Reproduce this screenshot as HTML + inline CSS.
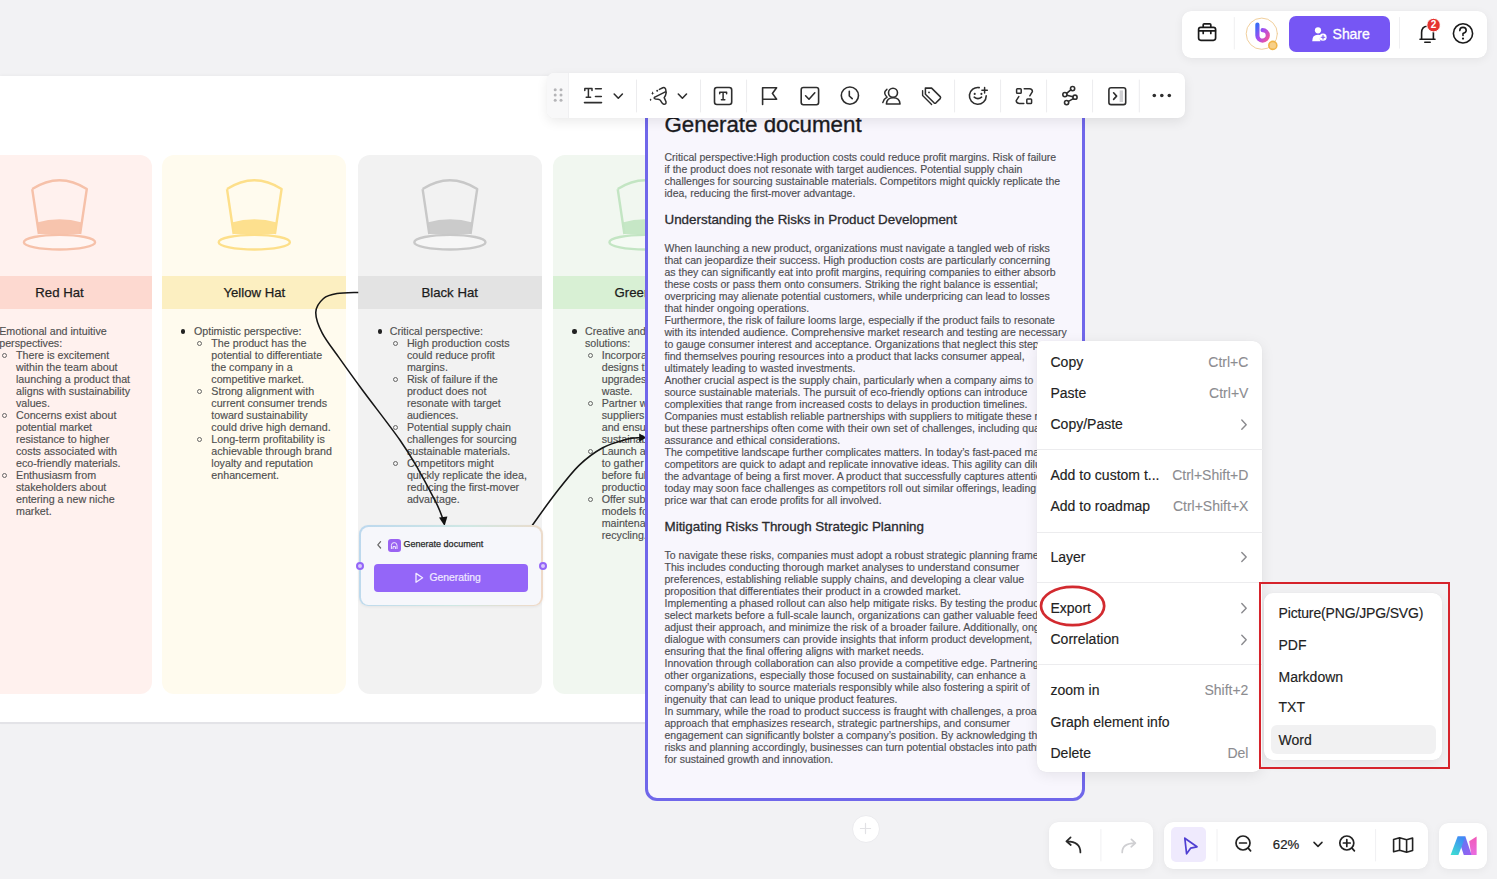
<!DOCTYPE html>
<html><head><meta charset="utf-8">
<style>
*{margin:0;padding:0;box-sizing:border-box}
html,body{width:1497px;height:879px;overflow:hidden;background:#f2f2f4;font-family:"Liberation Sans",sans-serif;position:relative}
.abs{position:absolute}
#frame{left:0;top:76px;width:1000px;height:648px;background:#fff;border-bottom:2px solid #e3e3e7;box-shadow:0 -1px 3px rgba(0,0,0,.035)}
.col{position:absolute;top:155px;width:184px;height:539px;border-radius:12px;overflow:hidden}
.col .hdr{position:absolute;left:0;top:276px;width:100%;height:33px}
.col .ttl{position:absolute;left:0;top:0;width:100%;height:33px;line-height:33px;text-align:center;font-size:13.2px;color:#1c1c1c;-webkit-text-stroke:0.25px #1c1c1c}
.col svg{position:absolute;left:0;top:0}
.ctext{position:absolute;font-size:10.7px;line-height:12px;color:#505050;white-space:nowrap;-webkit-text-stroke:0.15px #505050}
.dot{position:absolute;width:4.4px;height:4.4px;margin:-0.2px 0 0 -0.2px;border-radius:50%;background:#222}
.circ{position:absolute;width:5px;height:5px;border-radius:50%;border:1.2px solid #666}
.dtext{position:absolute;left:16.5px;font-size:10.5px;line-height:12px;color:#4e4e52;white-space:nowrap;-webkit-text-stroke:0.15px #4e4e52}
.dh{position:absolute;left:16.5px;font-size:13.4px;line-height:16px;color:#2a2a2e;white-space:nowrap;-webkit-text-stroke:0.3px #2a2a2e}
.mi{position:absolute;left:1050.5px;font-size:14px;line-height:17px;color:#222;white-space:nowrap;-webkit-text-stroke:0.15px #222}
.ms{position:absolute;right:248.6px;font-size:14px;line-height:17px;color:#8c8c90;white-space:nowrap;-webkit-text-stroke:0.1px #8c8c90}
</style></head><body>
<div id="frame" class="abs"></div>

<!-- columns -->
<div class="col" style="left:-32.5px;background:#fff1ee">
  <div class="hdr" style="top:121px;background:#fdd9d0"><div class="ttl">Red Hat</div></div>
</div>
<div class="col" style="left:162.3px;background:#fffbee">
  <div class="hdr" style="top:121px;background:#fcefc1"><div class="ttl">Yellow Hat</div></div>
</div>
<div class="col" style="left:357.7px;background:#f2f2f2">
  <div class="hdr" style="top:121px;background:#e3e3e3"><div class="ttl">Black Hat</div></div>
</div>
<div class="col" style="left:553px;background:#f1f7f0">
  <div class="hdr" style="top:121px;background:#d8f0d4"><div class="ttl">Green Hat</div></div>
</div>

<!-- hats -->
<svg class="abs" style="left:0;top:0" width="1497" height="879">
<g stroke="#f6c1a9" stroke-width="2.4" stroke-linejoin="round">
<path d="M38.5,234 L36.9,222.4 Q59.5,215.9 82.1,222.4 L80.5,234 Z" fill="#f7c4ad" stroke="none"/>
<path d="M32.2,189 Q59.5,171.4 86.8,189 L80.1,234 M32.2,189 L38.9,234" fill="none"/>
<ellipse cx="59.5" cy="242.2" rx="35.6" ry="7.3" fill="#fff5f2"/>
</g><g stroke="#fddf8a" stroke-width="2.4" stroke-linejoin="round">
<path d="M233.3,234 L231.70000000000002,222.4 Q254.3,215.9 276.90000000000003,222.4 L275.3,234 Z" fill="#fde08e" stroke="none"/>
<path d="M227.0,189 Q254.3,171.4 281.6,189 L274.90000000000003,234 M227.0,189 L233.70000000000002,234" fill="none"/>
<ellipse cx="254.3" cy="242.2" rx="35.6" ry="7.3" fill="#fffcf0"/>
</g><g stroke="#c8c8c8" stroke-width="2.4" stroke-linejoin="round">
<path d="M428.9,234 L427.29999999999995,222.4 Q449.9,215.9 472.5,222.4 L470.9,234 Z" fill="#cbcbcb" stroke="none"/>
<path d="M422.59999999999997,189 Q449.9,171.4 477.2,189 L470.5,234 M422.59999999999997,189 L429.29999999999995,234" fill="none"/>
<ellipse cx="449.9" cy="242.2" rx="35.6" ry="7.3" fill="#f6f6f6"/>
</g><g stroke="#c3e5c3" stroke-width="2.4" stroke-linejoin="round">
<path d="M624,234 L622.4,222.4 Q645,215.9 667.6,222.4 L666,234 Z" fill="#c6e7c6" stroke="none"/>
<path d="M617.7,189 Q645,171.4 672.3,189 L665.6,234 M617.7,189 L624.4,234" fill="none"/>
<ellipse cx="645" cy="242.2" rx="35.6" ry="7.3" fill="#f5faf4"/>
</g></svg>
<!-- column texts -->
<div class="ctext" style="left:-0.8px;top:324.5px">Emotional and intuitive</div>
<div class="ctext" style="left:-0.8px;top:336.5px">perspectives:</div>
<div class="ctext" style="left:16px;top:348.5px">There is excitement</div>
<div class="circ" style="left:1.7000000000000002px;top:353.0px"></div>
<div class="ctext" style="left:16px;top:360.5px">within the team about</div>
<div class="ctext" style="left:16px;top:372.5px">launching a product that</div>
<div class="ctext" style="left:16px;top:384.5px">aligns with sustainability</div>
<div class="ctext" style="left:16px;top:396.5px">values.</div>
<div class="ctext" style="left:16px;top:408.5px">Concerns exist about</div>
<div class="circ" style="left:1.7000000000000002px;top:413.0px"></div>
<div class="ctext" style="left:16px;top:420.5px">potential market</div>
<div class="ctext" style="left:16px;top:432.5px">resistance to higher</div>
<div class="ctext" style="left:16px;top:444.5px">costs associated with</div>
<div class="ctext" style="left:16px;top:456.5px">eco-friendly materials.</div>
<div class="ctext" style="left:16px;top:468.5px">Enthusiasm from</div>
<div class="circ" style="left:1.7000000000000002px;top:473.0px"></div>
<div class="ctext" style="left:16px;top:480.5px">stakeholders about</div>
<div class="ctext" style="left:16px;top:492.5px">entering a new niche</div>
<div class="ctext" style="left:16px;top:504.5px">market.</div>
<div class="ctext" style="left:194px;top:324.5px">Optimistic perspective:</div>
<div class="dot" style="left:181.1px;top:329.5px"></div>
<div class="ctext" style="left:211.3px;top:336.5px">The product has the</div>
<div class="circ" style="left:197.3px;top:341.0px"></div>
<div class="ctext" style="left:211.3px;top:348.5px">potential to differentiate</div>
<div class="ctext" style="left:211.3px;top:360.5px">the company in a</div>
<div class="ctext" style="left:211.3px;top:372.5px">competitive market.</div>
<div class="ctext" style="left:211.3px;top:384.5px">Strong alignment with</div>
<div class="circ" style="left:197.3px;top:389.0px"></div>
<div class="ctext" style="left:211.3px;top:396.5px">current consumer trends</div>
<div class="ctext" style="left:211.3px;top:408.5px">toward sustainability</div>
<div class="ctext" style="left:211.3px;top:420.5px">could drive high demand.</div>
<div class="ctext" style="left:211.3px;top:432.5px">Long-term profitability is</div>
<div class="circ" style="left:197.3px;top:437.0px"></div>
<div class="ctext" style="left:211.3px;top:444.5px">achievable through brand</div>
<div class="ctext" style="left:211.3px;top:456.5px">loyalty and reputation</div>
<div class="ctext" style="left:211.3px;top:468.5px">enhancement.</div>
<div class="ctext" style="left:389.7px;top:324.5px">Critical perspective:</div>
<div class="dot" style="left:377.7px;top:329.5px"></div>
<div class="ctext" style="left:406.9px;top:336.5px">High production costs</div>
<div class="circ" style="left:393.4px;top:341.0px"></div>
<div class="ctext" style="left:406.9px;top:348.5px">could reduce profit</div>
<div class="ctext" style="left:406.9px;top:360.5px">margins.</div>
<div class="ctext" style="left:406.9px;top:372.5px">Risk of failure if the</div>
<div class="circ" style="left:393.4px;top:377.0px"></div>
<div class="ctext" style="left:406.9px;top:384.5px">product does not</div>
<div class="ctext" style="left:406.9px;top:396.5px">resonate with target</div>
<div class="ctext" style="left:406.9px;top:408.5px">audiences.</div>
<div class="ctext" style="left:406.9px;top:420.5px">Potential supply chain</div>
<div class="circ" style="left:393.4px;top:425.0px"></div>
<div class="ctext" style="left:406.9px;top:432.5px">challenges for sourcing</div>
<div class="ctext" style="left:406.9px;top:444.5px">sustainable materials.</div>
<div class="ctext" style="left:406.9px;top:456.5px">Competitors might</div>
<div class="circ" style="left:393.4px;top:461.0px"></div>
<div class="ctext" style="left:406.9px;top:468.5px">quickly replicate the idea,</div>
<div class="ctext" style="left:406.9px;top:480.5px">reducing the first-mover</div>
<div class="ctext" style="left:406.9px;top:492.5px">advantage.</div>
<div class="ctext" style="left:585px;top:324.5px">Creative and innovative</div>
<div class="dot" style="left:572.5px;top:329.5px"></div>
<div class="ctext" style="left:585px;top:336.5px">solutions:</div>
<div class="ctext" style="left:601.7px;top:348.5px">Incorporate modular</div>
<div class="circ" style="left:588.0px;top:353.0px"></div>
<div class="ctext" style="left:601.7px;top:360.5px">designs that allow</div>
<div class="ctext" style="left:601.7px;top:372.5px">upgrades and reduce</div>
<div class="ctext" style="left:601.7px;top:384.5px">waste.</div>
<div class="ctext" style="left:601.7px;top:396.5px">Partner with local</div>
<div class="circ" style="left:588.0px;top:401.0px"></div>
<div class="ctext" style="left:601.7px;top:408.5px">suppliers to reduce</div>
<div class="ctext" style="left:601.7px;top:420.5px">and ensure</div>
<div class="ctext" style="left:601.7px;top:432.5px">sustainability.</div>
<div class="ctext" style="left:601.7px;top:444.5px">Launch a pilot</div>
<div class="circ" style="left:588.0px;top:449.0px"></div>
<div class="ctext" style="left:601.7px;top:456.5px">to gather feedback</div>
<div class="ctext" style="left:601.7px;top:468.5px">before full-scale</div>
<div class="ctext" style="left:601.7px;top:480.5px">production.</div>
<div class="ctext" style="left:601.7px;top:492.5px">Offer subscription</div>
<div class="circ" style="left:588.0px;top:497.0px"></div>
<div class="ctext" style="left:601.7px;top:504.5px">models for</div>
<div class="ctext" style="left:601.7px;top:516.5px">maintenance and</div>
<div class="ctext" style="left:601.7px;top:528.5px">recycling.</div>
<!-- connectors -->
<svg class="abs" style="left:0;top:0" width="1497" height="879">
<path d="M358.3,292.4 C354.8,292.6 342.8,292.6 337.0,293.6 C331.2,294.6 327.0,295.4 323.5,298.5 C320.0,301.6 316.0,306.6 315.8,312.3 C315.6,318.0 318.2,325.2 322.1,332.8 C326.0,340.4 332.5,348.4 339.2,357.9 C345.9,367.4 352.3,376.3 362.4,390.0 C372.5,403.7 390.5,426.6 399.9,440.0 C409.3,453.4 412.8,459.9 418.8,470.3 C424.8,480.8 432.1,494.8 436.1,502.7 C440.1,510.6 441.5,515.5 442.6,518.0" fill="none" stroke="#161616" stroke-width="1.55"/>
<path d="M439,517.6L444.6,526L447.4,516.6Z" fill="#111"/>
<path d="M532.2,525.4 C536.0,520.2 547.1,504.3 554.9,494.3 C562.7,484.3 570.8,473.4 578.8,465.6 C586.8,457.8 594.7,452.1 602.7,447.7 C610.7,443.3 620.4,441.0 626.6,439.3 C632.8,437.6 637.8,438.0 640.0,437.7" fill="none" stroke="#161616" stroke-width="1.55"/>
<path d="M639.2,433.6L646.4,437.6L639.2,441.8Z" fill="#111"/>
</svg>
<!-- node -->
<div class="abs" style="left:359px;top:525.2px;width:184px;height:81px;border-radius:9px;background:linear-gradient(100deg,#bcd8ee 0%,#cfe8e4 55%,#f1d9c6 100%);box-shadow:0 1px 3px rgba(0,0,0,.06)"></div>
<div class="abs" style="left:360.6px;top:526.8px;width:180.8px;height:77.8px;border-radius:7.6px;background:#f6f7fb"></div>
<svg class="abs" style="left:0;top:0" width="1497" height="879"><path d="M380.6,541.6L377.8,544.8L380.6,548" fill="none" stroke="#666" stroke-width="1.2" stroke-linecap="round" stroke-linejoin="round"/></svg>
<div class="abs" style="left:388.4px;top:539px;width:12.4px;height:12.6px;border-radius:3px;background:#9a63f2"></div>
<svg class="abs" style="left:388.4px;top:539px" width="13" height="13"><path d="M3.4,10V6.4Q3.4,3.6 6.2,3.6Q9,3.6 9,6.4V10M5,10V7.6H7.4V10" fill="none" stroke="#f3ecff" stroke-width="1"/></svg>
<div class="abs" style="left:403.6px;top:538.6px;font-size:9px;color:#2a2a2a;-webkit-text-stroke:0.25px #2a2a2a">Generate document</div>
<div class="abs" style="left:374.1px;top:564.2px;width:154.2px;height:27.8px;border-radius:4px;background:#9466f8"></div>
<svg class="abs" style="left:0;top:0" width="1497" height="879"><path d="M416,573.4L422.6,577.8L416,582.2Z" fill="none" stroke="#f2ebff" stroke-width="1.3" stroke-linejoin="round"/></svg>
<div class="abs" style="left:429.4px;top:571.6px;font-size:10.4px;color:#f0e9ff;-webkit-text-stroke:0.2px #f0e9ff">Generating</div>
<div class="abs" style="left:355.6px;top:562.4px;width:8px;height:8px;border-radius:50%;background:#d9c9fb;border:2px solid #9466f8"></div>
<div class="abs" style="left:538.6px;top:562.4px;width:8px;height:8px;border-radius:50%;background:#d9c9fb;border:2px solid #9466f8"></div>
<!-- doc -->
<div class="abs" id="doc" style="left:645px;top:96px;width:439.5px;height:704.5px;border:3.1px solid #7067ea;border-radius:12px;background:#f8f6fd;overflow:hidden">
<div class="abs" style="left:16.5px;top:13px;font-size:22.3px;color:#1b1b1f;white-space:nowrap;-webkit-text-stroke:0.35px #1b1b1f">Generate document</div>
<div class="dtext" style="top:52px">Critical perspective:High production costs could reduce profit margins. Risk of failure<br>if the product does not resonate with target audiences. Potential supply chain<br>challenges for sourcing sustainable materials. Competitors might quickly replicate the<br>idea, reducing the first-mover advantage.</div>
<div class="dh" style="top:113.3px">Understanding the Risks in Product Development</div>
<div class="dtext" style="top:142.7px">When launching a new product, organizations must navigate a tangled web of risks<br>that can jeopardize their success. High production costs are particularly concerning<br>as they can significantly eat into profit margins, requiring companies to either absorb<br>these costs or pass them onto consumers. Striking the right balance is essential;<br>overpricing may alienate potential customers, while underpricing can lead to losses<br>that hinder ongoing operations.<br>Furthermore, the risk of failure looms large, especially if the product fails to resonate<br>with its intended audience. Comprehensive market research and testing are necessary<br>to gauge consumer interest and acceptance. Organizations that neglect this step may<br>find themselves pouring resources into a product that lacks consumer appeal,<br>ultimately leading to wasted investments.<br>Another crucial aspect is the supply chain, particularly when a company aims to<br>source sustainable materials. The pursuit of eco-friendly options can introduce<br>complexities that range from increased costs to delays in production timelines.<br>Companies must establish reliable partnerships with suppliers to mitigate these risks,<br>but these partnerships often come with their own set of challenges, including quality<br>assurance and ethical considerations.<br>The competitive landscape further complicates matters. In today&#8217;s fast-paced market,<br>competitors are quick to adapt and replicate innovative ideas. This agility can dilute<br>the advantage of being a first mover. A product that successfully captures attention<br>today may soon face challenges as competitors roll out similar offerings, leading to a<br>price war that can erode profits for all involved.</div>
<div class="dh" style="top:420px">Mitigating Risks Through Strategic Planning</div>
<div class="dtext" style="top:449.7px">To navigate these risks, companies must adopt a robust strategic planning framework.<br>This includes conducting thorough market analyses to understand consumer<br>preferences, establishing reliable supply chains, and developing a clear value<br>proposition that differentiates their product in a crowded market.<br>Implementing a phased rollout can also help mitigate risks. By testing the product in<br>select markets before a full-scale launch, organizations can gather valuable feedback,<br>adjust their approach, and minimize the risk of a broader failure. Additionally, ongoing<br>dialogue with consumers can provide insights that inform product development,<br>ensuring that the final offering aligns with market needs.<br>Innovation through collaboration can also provide a competitive edge. Partnering with<br>other organizations, especially those focused on sustainability, can enhance a<br>company’s ability to source materials responsibly while also fostering a spirit of<br>ingenuity that can lead to unique product features.<br>In summary, while the road to product success is fraught with challenges, a proactive<br>approach that emphasizes research, strategic partnerships, and consumer<br>engagement can significantly bolster a company’s position. By acknowledging these<br>risks and planning accordingly, businesses can turn potential obstacles into pathways<br>for sustained growth and innovation.</div>
</div>
<!-- top toolbar -->
<div class="abs" style="left:546.5px;top:73px;width:638px;height:44.8px;background:#fff;border-radius:7px;box-shadow:0 4px 12px rgba(0,0,0,.08),0 0 1px rgba(0,0,0,.06)"></div>
<div class="abs" style="left:546.5px;top:73px;width:22px;height:44.8px;background:#f8f8f9;border-radius:7px 0 0 7px;border-right:1px solid #f0f0f2"></div>
<svg class="abs" style="left:0;top:0" width="1497" height="130" fill="none" stroke="#2e2e2e" stroke-width="1.6" stroke-linecap="round" stroke-linejoin="round">
<g fill="#b5b5b8" stroke="none"><circle cx="555.2" cy="89.8" r="1.5"/><circle cx="561" cy="89.8" r="1.5"/><circle cx="555.2" cy="95" r="1.5"/><circle cx="561" cy="95" r="1.5"/><circle cx="555.2" cy="100.2" r="1.5"/><circle cx="561" cy="100.2" r="1.5"/></g>
<g stroke="#ececee" stroke-width="1"><path d="M636.5,80V112M700.5,80V112M746.6,80V112M954.6,80V112M1000.6,80V112M1046.6,80V112M1092.6,80V112M1139.3,80V112"/></g>
<!-- T= -->
<path d="M584.8,89V90.6M584.8,88.6H592M588.4,88.6V97.3M586.2,97.3H590.6M592,88.6V90.6" stroke-width="1.5"/>
<path d="M595.5,88.8H601.3M595.5,96.5H601.3M584.5,102.6H601.5" stroke-width="1.6"/>
<path d="M614.2,94L618.3,98.2L622.4,94"/>
<!-- brush -->
<path d="M654.4,97.3L665.3,91.8M659.4,89.4L662.8,87.8Q664.8,87 665.6,89L666.2,92.6Q665.8,95.4 664.2,97.6L666,101.8Q666.4,104.4 663.8,104.2Q662.6,104 661.8,102.6L660.4,100.4Q659.6,99.4 658,99.2L655.6,99Q653.6,98.6 654.4,97.3" stroke-width="1.5"/>
<circle cx="657.2" cy="90.7" r="1" fill="#2e2e2e" stroke="none"/>
<path d="M652.6,91.3L653.3,92.9L654.6,93.2L653.3,93.6L652.6,95L651.9,93.6L650.6,93.2L651.9,92.9Z" fill="#2e2e2e" stroke="none"/>
<path d="M650.6,98.5L651.5,99.7L650.6,100.9L649.7,99.7Z" fill="#2e2e2e" stroke="none"/>
<path d="M678.3,94L682.4,98.2L686.5,94"/>
<!-- T box -->
<rect x="714.5" y="87.5" width="17.2" height="17" rx="2.4"/>
<path d="M719.7,93.8V92.3H726.6V93.8M723.1,92.3V99.7M721.4,99.7H724.8" stroke-width="1.5"/>
<!-- flag -->
<path d="M762.6,104.5V87.8H776.6L772.4,93.4L776.6,99.2H762.6"/>
<!-- checkbox -->
<rect x="801.2" y="87.5" width="17.4" height="17.2" rx="2.2"/>
<path d="M805.6,95.8L809,99.2L814.8,92.8"/>
<!-- clock -->
<circle cx="849.9" cy="95.6" r="8.6"/>
<path d="M849.3,91.2V96L852.2,98.6"/>
<!-- persons -->
<circle cx="893" cy="92.7" r="4.5"/>
<path d="M886.4,104Q886.8,97.8 893.2,97.8Q899.6,97.8 900,104Z"/>
<path d="M886.9,89.3Q882.4,92.8 887.1,97.2Q883.8,98.8 882.8,102.6" stroke-width="1.5"/>
<!-- tags -->
<path d="M925.4,88.1L931.6,88.1L940.2,96.6Q941,97.6 940.2,98.6L936,102.8Q935,103.6 934,102.8L925.4,94.2Z" stroke-width="1.55"/>
<path d="M922.6,90.6L922.6,95.4L931.6,104.4" stroke-width="1.4"/>
<circle cx="929" cy="92.4" r="0.9" fill="#2e2e2e" stroke="none"/>
<!-- emoji -->
<path d="M979.2,87.6A8.4,8.4 0 1 0 986.2,95.9" stroke-width="1.6"/>
<path d="M974.2,97.2Q977.9,100.2 981.6,97.2" stroke-width="1.6"/>
<circle cx="974.7" cy="93.9" r="1.05" fill="#2e2e2e" stroke="none"/><circle cx="981.4" cy="93.9" r="1.05" fill="#2e2e2e" stroke="none"/>
<path d="M984.6,87.5V92.9M981.9,90.2H987.3" stroke-width="1.5"/>
<!-- convert -->
<rect x="1016.6" y="88.8" width="4.6" height="4.4" rx="0.8" stroke-width="1.5"/>
<rect x="1026.8" y="98.9" width="4.8" height="4.6" rx="0.8" stroke-width="1.5"/>
<path d="M1024.2,88.8H1029.4Q1032.4,88.8 1032.4,91.6L1029.8,95.8" stroke-width="1.5"/>
<path d="M1023.8,103.4H1019.2Q1016.2,103.4 1016.2,100.6L1018.8,96.6" stroke-width="1.5"/>
<!-- graph -->
<circle cx="1072.6" cy="88.6" r="2.1"/><circle cx="1064.9" cy="94.6" r="2.1"/><circle cx="1075" cy="97.2" r="2.1"/><circle cx="1066.6" cy="102.6" r="2.1"/>
<path d="M1070.8,89.8L1066.6,93.4M1066.9,95.3L1073,96.7M1073.4,98.6L1068.4,101.4"/>
<!-- panel -->
<rect x="1108.9" y="87.7" width="16.8" height="16.9" rx="2.2"/>
<rect x="1119.6" y="90.4" width="3.4" height="11.6" fill="#cfcfd2" stroke="none"/>
<path d="M1113.6,92.8L1116.6,96.1L1113.6,99.4"/>
<!-- dots -->
<g fill="#2e2e2e" stroke="none"><circle cx="1154.3" cy="95.5" r="1.8"/><circle cx="1161.8" cy="95.5" r="1.8"/><circle cx="1169.3" cy="95.5" r="1.8"/></g>
</svg>
<!-- top right bar -->
<div class="abs" style="left:1182px;top:10.5px;width:305px;height:47px;background:#fff;border-radius:9px;box-shadow:0 2px 10px rgba(0,0,0,.06),0 0 1px rgba(0,0,0,.05)"></div>
<div class="abs" style="left:1289.2px;top:16px;width:100.8px;height:35.8px;background:#7656f4;border-radius:7px"></div>
<div class="abs" style="left:1332.6px;top:25.6px;font-size:14px;color:#fff;letter-spacing:-0.05px;-webkit-text-stroke:0.3px #fff">Share</div>
<svg class="abs" style="left:0;top:0" width="1497" height="70" fill="none" stroke="#1a1a1a" stroke-width="1.7" stroke-linecap="round" stroke-linejoin="round">
<rect x="1198.6" y="27.3" width="17" height="13" rx="2.2"/>
<path d="M1203.2,27V24.8Q1203.2,23.8 1204.2,23.8H1209.8Q1210.8,23.8 1210.8,24.8V27"/>
<path d="M1198.8,30.8H1215.4M1203.2,30.8V33.4M1210.8,30.8V33.4"/>
<path d="M1234.3,17.5V49" stroke="#efeff1" stroke-width="1"/>
<path d="M1399.5,17.5V48.2" stroke="#efeff1" stroke-width="1"/>
<!-- avatar -->
<circle cx="1261.8" cy="33.7" r="15.6" stroke="#f1cf9c" stroke-width="1" fill="#fff"/>
<defs><linearGradient id="bg1" x1="0" y1="0" x2="1" y2="1"><stop offset="0" stop-color="#3a6cf6"/><stop offset="0.45" stop-color="#a44cf2"/><stop offset="1" stop-color="#f3559a"/></linearGradient></defs>
<path d="M1257.4,24.6V35.4A5.2,5.2 0 1 0 1262.6,30.2" stroke="url(#bg1)" stroke-width="4.2" stroke-linecap="round"/>
<circle cx="1272.8" cy="45.4" r="4" fill="#f7d089" stroke="#f0b54a" stroke-width="1.6"/>
<!-- share person icon -->
<g stroke="none" fill="#fff"><circle cx="1318" cy="30.3" r="3.1"/><path d="M1312.2,41.2Q1312.2,34.8 1318,34.8Q1320.4,34.8 1321.6,35.8A4,4 0 0 0 1320.6,41.2Z"/><circle cx="1323" cy="37.2" r="3.6"/></g>
<path d="M1323,35.4V39M1321.2,37.2H1324.8" stroke="#7656f4" stroke-width="1.1"/>
<!-- bell -->
<path d="M1420,39.2H1435M1421.6,39.2V32.8Q1421.6,26.2 1427.5,26.2Q1433.4,26.2 1433.4,32.8V39.2M1424.8,42.3H1430.2" stroke-width="1.6"/>
<circle cx="1433.6" cy="25.1" r="6.8" fill="#e5332f" stroke="#fff" stroke-width="1"/>
<!-- help -->
<circle cx="1463" cy="33.4" r="9.6" stroke-width="1.6"/>
<path d="M1459.8,30.6Q1459.8,27.4 1463,27.4Q1466.2,27.4 1466.2,30.4Q1466.2,32.2 1463,33.6V35.4" stroke-width="1.6"/>
<circle cx="1463" cy="38.6" r="1.1" fill="#1a1a1a" stroke="none"/>
</svg>
<div class="abs" style="left:1429.6px;top:19.2px;width:8px;text-align:center;font-size:10px;font-weight:bold;color:#fff">2</div>
<!-- context menu -->
<div class="abs" style="left:1036.8px;top:340.6px;width:225.7px;height:431.9px;background:#fff;border-radius:5px 9px 9px 9px;box-shadow:0 3px 14px rgba(0,0,0,.08),0 0 1px rgba(0,0,0,.08)"></div>
<div class="mi" style="top:353.5px">Copy</div>
<div class="ms" style="top:353.5px">Ctrl+C</div>
<div class="mi" style="top:384.7px">Paste</div>
<div class="ms" style="top:384.7px">Ctrl+V</div>
<div class="mi" style="top:416.2px">Copy/Paste</div>
<div class="abs" style="left:1037px;top:448.9px;width:225.5px;height:1px;background:#ececee"></div>
<div class="mi" style="top:466.5px">Add to custom t...</div>
<div class="ms" style="top:466.5px">Ctrl+Shift+D</div>
<div class="mi" style="top:498.4px">Add to roadmap</div>
<div class="ms" style="top:498.4px">Ctrl+Shift+X</div>
<div class="abs" style="left:1037px;top:531.9px;width:225.5px;height:1px;background:#ececee"></div>
<div class="mi" style="top:548.5px">Layer</div>
<div class="abs" style="left:1037px;top:581.9px;width:225.5px;height:1px;background:#ececee"></div>
<div class="mi" style="top:599.7px">Export</div>
<div class="mi" style="top:631.3px">Correlation</div>
<div class="abs" style="left:1037px;top:663.7px;width:225.5px;height:1px;background:#ececee"></div>
<div class="mi" style="top:681.5px">zoom in</div>
<div class="ms" style="top:681.5px">Shift+2</div>
<div class="mi" style="top:713.8px">Graph element info</div>
<div class="mi" style="top:744.5px">Delete</div>
<div class="ms" style="top:744.5px">Del</div>
<svg class="abs" style="left:0;top:0" width="1497" height="879" fill="none" stroke="#8a8a8e" stroke-width="1.4" stroke-linecap="round" stroke-linejoin="round">
<path d="M1241.8,420.09999999999997L1246.2,424.7L1241.8,429.3"/>
<path d="M1241.8,552.4L1246.2,557L1241.8,561.6"/>
<path d="M1241.8,603.6L1246.2,608.2L1241.8,612.8000000000001"/>
<path d="M1241.8,635.1999999999999L1246.2,639.8L1241.8,644.4"/>
</svg>
<div class="abs" style="left:1264px;top:593px;width:178px;height:167px;background:#fff;border-radius:9px;box-shadow:0 3px 12px rgba(0,0,0,.07),0 0 1px rgba(0,0,0,.08)"></div>
<div class="abs" style="left:1270.7px;top:724.5px;width:165.8px;height:29.5px;background:#f1f1f2;border-radius:6px"></div>
<div class="mi" style="left:1278.5px;top:605.2px;letter-spacing:-0.15px">Picture(PNG/JPG/SVG)</div>
<div class="mi" style="left:1278.5px;top:636.8px">PDF</div>
<div class="mi" style="left:1278.5px;top:668.5px">Markdown</div>
<div class="mi" style="left:1278.5px;top:699.4px">TXT</div>
<div class="mi" style="left:1278.5px;top:731.5px">Word</div>
<div class="abs" style="left:1258.5px;top:581.5px;width:191.5px;height:187px;border:2.9px solid #d6232b"></div>
<svg class="abs" style="left:0;top:0" width="1497" height="879"><ellipse cx="1072.6" cy="606" rx="31.6" ry="19.2" fill="none" stroke="#d22a2f" stroke-width="2.7"/></svg>
<!-- bottom bars -->
<div class="abs" style="left:851.5px;top:814.5px;width:28px;height:28px;border-radius:50%;background:#fff;border:1px solid #ebebee"></div>
<div class="abs" style="left:1048.8px;top:822.2px;width:103.8px;height:46.8px;background:#fff;border-radius:9px;box-shadow:0 2px 8px rgba(0,0,0,.05),0 0 1px rgba(0,0,0,.05)"></div>
<div class="abs" style="left:1164px;top:822.2px;width:264px;height:46.8px;background:#fff;border-radius:9px;box-shadow:0 2px 8px rgba(0,0,0,.05),0 0 1px rgba(0,0,0,.05)"></div>
<div class="abs" style="left:1438.8px;top:822.6px;width:48.6px;height:46.4px;background:#fff;border-radius:9px;box-shadow:0 2px 8px rgba(0,0,0,.05),0 0 1px rgba(0,0,0,.05)"></div>
<div class="abs" style="left:1171.2px;top:827px;width:35px;height:35px;background:#efeafd;border-radius:5px"></div>
<div class="abs" style="left:1272.8px;top:837.4px;font-size:13.2px;color:#222;-webkit-text-stroke:0.2px #222">62%</div>
<svg class="abs" style="left:0;top:0" width="1497" height="879" fill="none" stroke="#222" stroke-width="1.7" stroke-linecap="round" stroke-linejoin="round">
<path d="M865.5,823.4V833.6M860.4,828.5H870.6" stroke="#e2e2e5" stroke-width="1.2"/>
<path d="M1100.9,829.5V861" stroke="#f0f0f2" stroke-width="1"/>
<path d="M1217,829.5V861M1375.6,829.5V861" stroke="#f0f0f2" stroke-width="1"/>
<path d="M1080.4,852.4Q1080.4,841.6 1067,841.4M1070.6,837.4L1066.4,841.4L1070.8,845" stroke="#2a2a2a"/>
<path d="M1122.2,852.4Q1122.2,843.4 1135,843.2M1131.4,839.4L1135.4,843.2L1131.2,846.8" stroke="#cfcfd2"/>
<path d="M1184.8,838.2L1197,846.8L1190.6,848.2L1186.6,853.8Z" stroke="#4f3fd2" stroke-width="1.7"/>
<circle cx="1243" cy="843" r="7"/><path d="M1239.6,843H1246.4M1248.2,848.2L1250.6,850.8"/>
<path d="M1314,842.4L1318,846.4L1322,842.4" stroke-width="1.5"/>
<circle cx="1346.8" cy="843" r="7"/><path d="M1343.4,843H1350.2M1346.8,839.6V846.4M1352,848.2L1354.4,850.8"/>
<path d="M1393.6,839.4L1399.6,837.8L1406.6,839.8L1412.6,838V850.4L1406.6,852.2L1399.6,850.2L1393.6,851.8Z M1399.6,837.8V850.2M1406.6,839.8V852.2" stroke-width="1.6"/>
<defs>
<linearGradient id="lg1" x1="0" y1="1" x2="0.6" y2="0"><stop offset="0" stop-color="#3de3d0"/><stop offset="1" stop-color="#3f8cf5"/></linearGradient>
<linearGradient id="lg2" x1="0" y1="0" x2="1" y2="1"><stop offset="0" stop-color="#4a82f6"/><stop offset="1" stop-color="#a05cf0"/></linearGradient>
<linearGradient id="lg3" x1="0" y1="0" x2="0" y2="1"><stop offset="0" stop-color="#f25ab8"/><stop offset="1" stop-color="#e86ce0"/></linearGradient>
</defs>
<g stroke="none">
<path d="M1469.2,841.2L1476.6,836.6V855H1471.2Z" fill="url(#lg3)"/>
<path d="M1457.6,836.4H1465.4L1471.6,855H1463.8Z" fill="url(#lg2)"/>
<path d="M1450.6,855L1457.6,836.4H1465.4L1458.4,855Z" fill="url(#lg1)"/>
</g>
</svg>
</body></html>
